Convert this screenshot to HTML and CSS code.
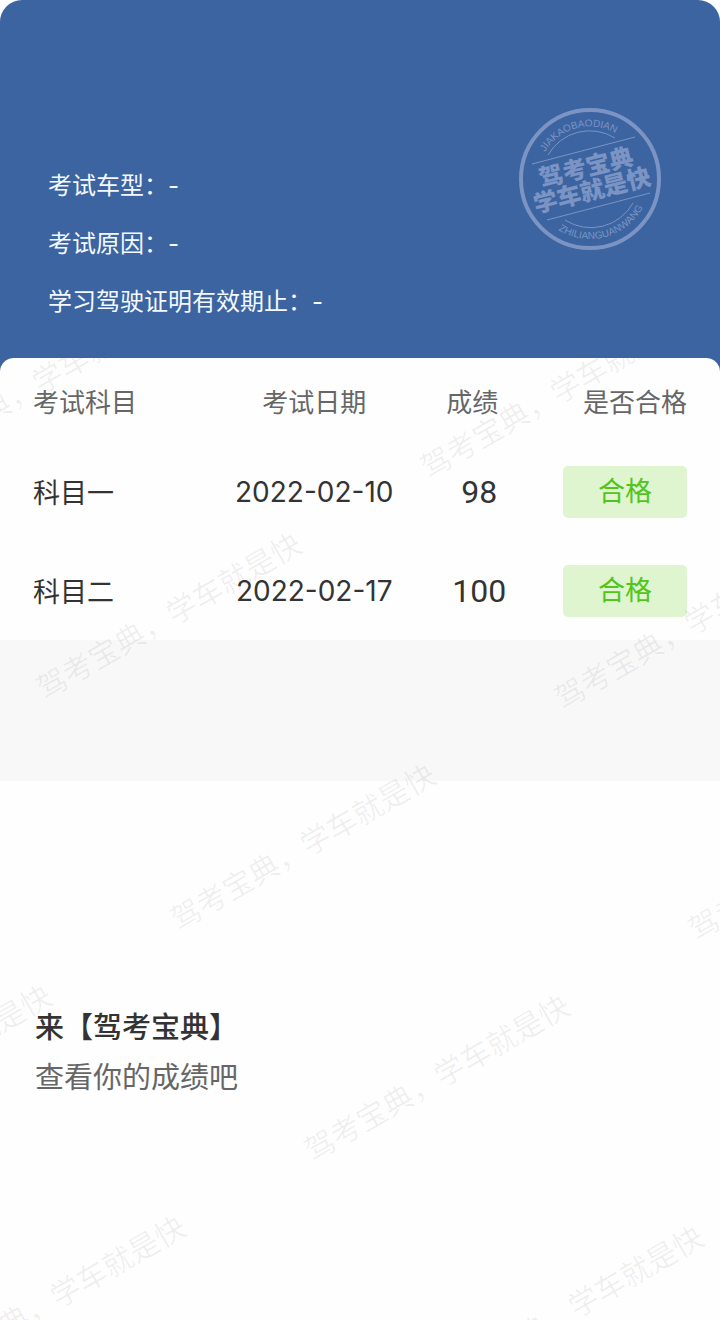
FILE: index.html
```html
<!DOCTYPE html>
<html lang="zh-CN">
<head>
    <meta charset="UTF-8">
    <meta name="viewport" content="width=device-width, initial-scale=1.0">
    <title>考试成绩</title>
    <link rel="stylesheet" href="styles.css">
</head>
<body>
    <header class="banner">
        <div class="info">
            <p>考试车型：-</p>
            <p>考试原因：-</p>
            <p>学习驾驶证明有效期止：-</p>
        </div>
        <svg class="stamp" viewBox="0 0 142 142" width="142" height="142">
            <defs>
                <path id="arc-top" d="M18.5 71A52.5 52.5 0 0 1 123.5 71"/>
                <path id="arc-bottom" d="M11 71A60 60 0 0 0 131 71"/>
            </defs>
            <circle cx="71" cy="71" r="69" stroke-width="4"/>
            <path d="M13 56L116 29M28 112L131 85"/>
            <path d="M29 47A48 48 0 0 1 96 30M46 112A48 48 0 0 0 114 95"/>
            <g transform="rotate(-15 71 71)">
                <text class="stamp-latin"><textPath href="#arc-top" startOffset="50%">JIAKAOBAODIAN</textPath></text>
                <text class="stamp-latin"><textPath href="#arc-bottom" startOffset="50%">ZHILIANGUANWANG</textPath></text>
            </g>
            <text class="stamp-name" transform="translate(67 59) rotate(-14)" y="9">驾考宝典</text>
            <text class="stamp-name" transform="translate(73 82) rotate(-14)" y="9">学车就是快</text>
        </svg>
    </header>

    <main class="content">
        <table class="scores">
            <thead>
                <tr>
                    <th class="col-subject">考试科目</th>
                    <th class="col-date">考试日期</th>
                    <th class="col-score">成绩</th>
                    <th class="col-result">是否合格</th>
                </tr>
            </thead>
            <tbody>
                <tr>
                    <td class="col-subject">科目一</td>
                    <td class="col-date">2022-02-10</td>
                    <td class="col-score">98</td>
                    <td class="col-result"><span class="badge">合格</span></td>
                </tr>
                <tr>
                    <td class="col-subject">科目二</td>
                    <td class="col-date">2022-02-17</td>
                    <td class="col-score">100</td>
                    <td class="col-result"><span class="badge">合格</span></td>
                </tr>
            </tbody>
        </table>

        <div class="divider"></div>

        <section class="promo">
            <h2>来【驾考宝典】</h2>
            <p>查看你的成绩吧</p>
        </section>

        <!-- repeated watermark over the whole content area -->
        <svg class="watermark" aria-hidden="true">
            <defs>
                <text id="mark" x="-14" y="11" transform="rotate(-30)">驾考宝典，学车就是快</text>
            </defs>
            <use href="#mark" transform="translate(-83 95)"/>
            <use href="#mark" transform="translate(435 105)"/>
            <use href="#mark" transform="translate(51 326)"/>
            <use href="#mark" transform="translate(569 336)"/>
            <use href="#mark" transform="translate(185 557)"/>
            <use href="#mark" transform="translate(703 567)"/>
            <use href="#mark" transform="translate(-199 778)"/>
            <use href="#mark" transform="translate(319 788)"/>
            <use href="#mark" transform="translate(-65 1009)"/>
            <use href="#mark" transform="translate(453 1019)"/>
        </svg>
    </main>
</body>
</html>
```

FILE: styles.css
```css
body, h2, p {
    margin: 0;
}

body {
    display: flex;
    flex-direction: column;
    min-height: 100vh;
    font-family: Inter, "Noto Sans CJK SC", sans-serif;
    color: #333;
    background-color: #fff;
}

/* banner */
.banner {
    display: flex;
    justify-content: space-between;
    align-items: flex-start;
    padding: 108px 59px 41px 48px;
    border-radius: 22px 22px 0 0;
    background-color: #3b64a1;
}

.info {
    margin-top: 49px;
    font-size: 24px;
    line-height: 58px;
    color: #f4f8ff;
}

.stamp {
    flex: none;
    fill: none;
    stroke: #7b94c4;
    stroke-width: 1;
}

.stamp text {
    fill: #7b94c4;
    stroke: none;
    text-anchor: middle;
}

.stamp-latin {
    font-family: "Liberation Sans", sans-serif;
    font-size: 10px;
}

.stamp-name {
    font-size: 24px;
    font-weight: 900;
}

/* content */
.content {
    position: relative;
    flex: 1;
    margin-top: -14px;
    border-radius: 14px 14px 0 0;
    background-color: #fefefe;
    overflow: hidden;
}

.scores {
    width: 100%;
    padding: 0 33px;
    border-spacing: 0;
    table-layout: fixed;
}

.scores th, .scores td {
    box-sizing: border-box;
    padding: 0;
    text-align: center;
}

.scores th {
    height: 84px;
    font-size: 26px;
    font-weight: 400;
    color: #666;
}

.scores td {
    height: 99px;
    font-size: 27px;
}

.scores .col-subject {
    width: 27.5%;
    text-align: left;
}

.scores .col-date {
    width: 31%;
}

.scores .col-score {
    width: 19.5%;
}

.scores .col-result {
    width: 22%;
    text-align: right;
}

.scores th.col-score {
    padding-right: 14px;
}

.scores td.col-date {
    font-size: 28px;
}

.scores td.col-score {
    font-family: Roboto, sans-serif;
    font-size: 32px;
}

.badge {
    display: inline-block;
    padding: 0 35px;
    line-height: 52px;
    border-radius: 5px;
    vertical-align: middle;
    color: #52c41a;
    background-color: #def5d0;
}

.divider {
    height: 141px;
    background-color: #f8f8f8;
}

.promo {
    padding: 222px 35px 40px;
    font-size: 29px;
    line-height: 50px;
    color: #666;
}

.promo h2 {
    font-size: 29px;
    font-weight: 500;
    color: #333;
}

.watermark {
    position: absolute;
    top: 0;
    left: 0;
    width: 100%;
    height: 100%;
    font-size: 30px;
    fill: rgba(0, 0, 0, .06);
    pointer-events: none;
}
```
